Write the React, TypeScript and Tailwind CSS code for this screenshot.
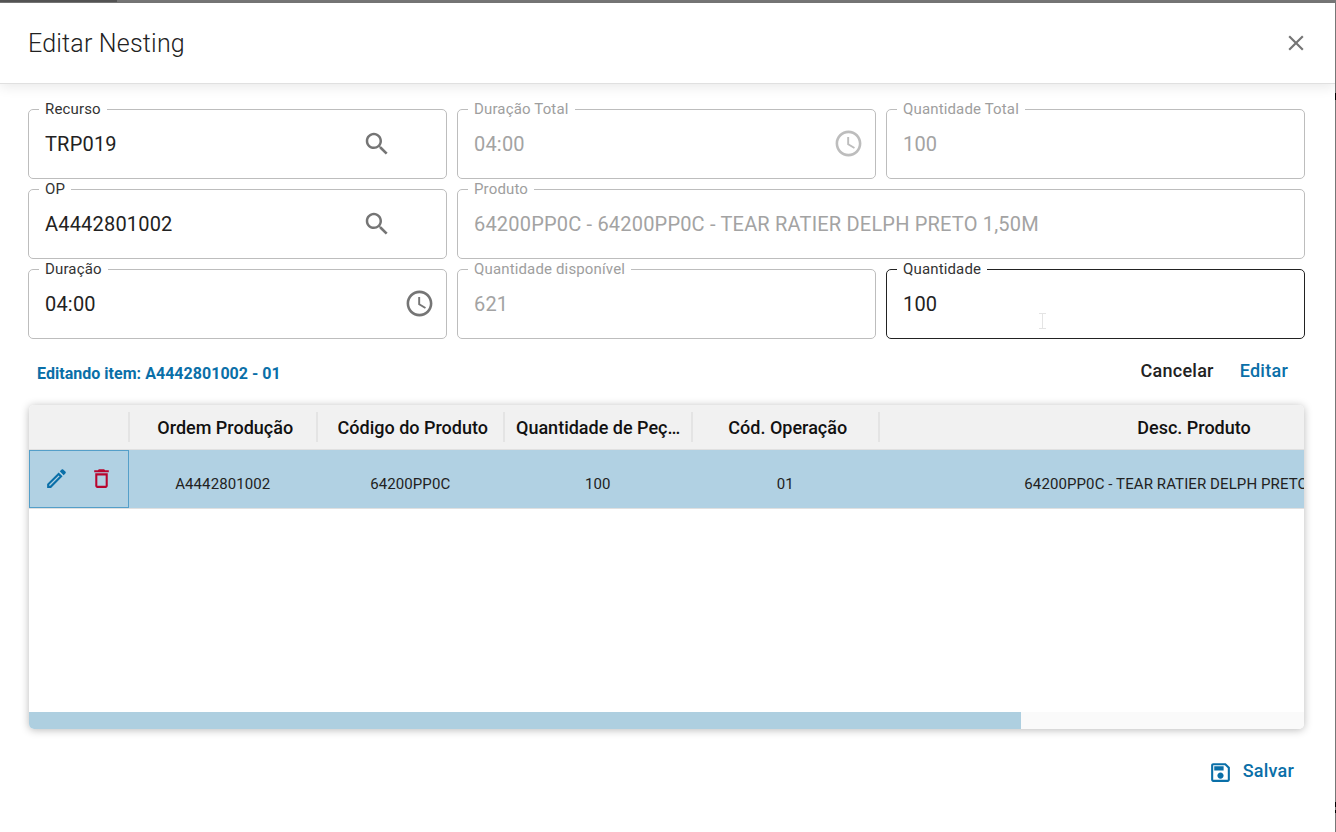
import React from "react";

const SEARCH = "M15.5 14h-.79l-.28-.27C15.41 12.59 16 11.11 16 9.5 16 5.91 13.09 3 9.5 3S3 5.91 3 9.5 5.91 16 9.5 16c1.61 0 3.09-.59 4.23-1.57l.27.28v.79l5 4.99L20.49 19l-4.99-5zm-6 0C7.01 14 5 11.99 5 9.5S7.01 5 9.5 5 14 7.01 14 9.5 11.99 14 9.5 14z";
const CLOCK = "M11.99 2C6.47 2 2 6.48 2 12s4.47 10 9.99 10C17.52 22 22 17.52 22 12S17.52 2 11.99 2zM12 20c-4.42 0-8-3.58-8-8s3.58-8 8-8 8 3.58 8 8-3.58 8-8 8zM12.5 7H11v6l5.25 3.15.75-1.23-4.5-2.67z";
const CLOSE = "M19 6.41L17.59 5 12 10.59 6.41 5 5 6.41 10.59 12 5 17.59 6.41 19 12 13.41 17.59 19 19 17.59 13.41 12z";
const EDIT = "M14.06 9.02l.92.92L5.92 19H5v-.92l9.06-9.06M17.66 3c-.25 0-.51.1-.7.29l-1.83 1.83 3.75 3.75 1.83-1.83c.39-.39.39-1.02 0-1.41l-2.34-2.34c-.2-.2-.45-.29-.71-.29zm-3.6 3.19L3 17.25V21h3.75L17.81 9.94l-3.75-3.75z";
const TRASH = "M6 19c0 1.1.9 2 2 2h8c1.1 0 2-.9 2-2V7H6v12zM8 9h8v10H8V9zm7.5-5l-1-1h-5l-1 1H5v2h14V4z";
const SAVE = "M17 3H5c-1.11 0-2 .9-2 2v14c0 1.1.89 2 2 2h14c1.1 0 2-.9 2-2V7l-4-4zm2 16H5V5h11.17L19 7.83V19zm-7-7c-1.66 0-3 1.34-3 3s1.34 3 3 3 3-1.34 3-3-1.34-3-3-3zM6 6h9v4H6z";

function Icon({ d, size, className }: { d: string; size: number; className?: string }) {
  return (
    <svg viewBox="0 0 24 24" width={size} height={size} fill="currentColor" className={className}>
      <path d={d} />
    </svg>
  );
}

type FieldProps = {
  label: string;
  value: string;
  disabled?: boolean;
  focused?: boolean;
  icon?: React.ReactNode;
  className?: string;
  children?: React.ReactNode;
};

function Field({ label, value, disabled, focused, icon, className, children }: FieldProps) {
  const border = focused ? "border-[#222222]" : "border-[#bdbdbd]";
  const legend = disabled ? "text-[#9e9e9e]" : "text-[#333333]";
  const text = disabled ? "text-[#a3a3a3]" : "text-[#222222]";
  return (
    <fieldset className={`relative h-[78px] rounded-[5px] border ${border} ${className ?? ""}`}>
      <legend className={`ml-[10px] h-4 px-[6px] text-[15px] leading-4 tracking-[0.15px] ${legend}`}>{label}</legend>
      <div className="flex h-[53px] items-center pl-4 pr-[11px]">
        <span className={`flex-1 truncate text-[20px] leading-6 tracking-[0.19px] ${text}`}>{value}</span>
        {icon}
      </div>
      {children}
    </fieldset>
  );
}

const COLS = [
  { title: "Ordem Produção", value: "A4442801002", w: "w-[187.5px]", head: "pl-[14px] pr-[9px] border-r-2", cell: "w-[187.5px]" },
  { title: "Código do Produto", value: "64200PP0C", w: "w-[187.5px]", head: "pl-[14px] pr-[9px] border-r-2", cell: "w-[187.5px]" },
  { title: "Quantidade de Peças", value: "100", w: "w-[187.5px]", head: "pl-[11px] pr-[9px] border-r-2", cell: "w-[187.5px]" },
  { title: "Cód. Operação", value: "01", w: "w-[187.5px]", head: "pl-[14px] pr-[9px] border-r-2", cell: "w-[187.5px]" },
  { title: "Desc. Produto", value: "64200PP0C - TEAR RATIER DELPH PRETO 1,50M", w: "w-[628px]", head: "px-3", cell: "w-[628px] pr-[8px]" },
];

export default function App() {
  const searchIcon = <Icon d={SEARCH} size={30} className="mr-[43px] shrink-0 text-[#757575]" />;
  return (
    <div className="relative h-[832px] w-[1336px]">
      <div
        className="flex h-[832px] w-[1336px] flex-col overflow-hidden border-r border-[#777777] bg-white text-[#222222]"
        style={{ fontFamily: "Roboto, 'Liberation Sans', sans-serif" }}
      >
        <div className="h-[3px] shrink-0 bg-[#777777]">
          <div className="h-[2px] w-[117px] bg-[#555555]" />
        </div>

        <header className="relative z-10 flex h-[81px] shrink-0 items-center justify-between border-b border-[#e0e0e0] bg-white pl-[28px] pr-[26px] shadow-[0_3px_12px_rgba(0,0,0,0.09)]">
          <h1 className="pt-[2px] text-[25px] font-light leading-8 tracking-[0.2px] text-[#222222]">Editar Nesting</h1>
          <Icon d={CLOSE} size={26} className="text-[#757575]" />
        </header>

        <main className="flex flex-1 flex-col pl-[28px] pr-[30px] pt-[17px]">
          <div className="grid grid-cols-3 gap-x-[10px] gap-y-[2px]">
            <Field label="Recurso" value="TRP019" icon={searchIcon} />
            <Field
              label="Duração Total"
              value="04:00"
              disabled
              icon={<Icon d={CLOCK} size={31} className="shrink-0 text-[#bdbdbd]" />}
            />
            <Field label="Quantidade Total" value="100" disabled />
            <Field label="OP" value="A4442801002" icon={searchIcon} />
            <Field
              label="Produto"
              value="64200PP0C - 64200PP0C - TEAR RATIER DELPH PRETO 1,50M"
              disabled
              className="col-span-2"
            />
            <Field
              label="Duração"
              value="04:00"
              icon={<Icon d={CLOCK} size={31} className="shrink-0 text-[#757575]" />}
            />
            <Field label="Quantidade disponível" value="621" disabled />
            <Field label="Quantidade" value="100" focused>
              <svg width="7" height="16" viewBox="0 0 7 16" className="absolute left-[152px] top-[36px] text-[#e4e4e4]" fill="none" stroke="currentColor">
                <path d="M0 .5h7M3.5 .5v15M0 15.5h7" />
              </svg>
            </Field>
          </div>

          <div className="mt-[13px] flex h-[38px] items-center justify-between pl-[9px] pr-[17px]">
            <span className="pt-[5px] text-[16px] font-bold tracking-[0.03px] text-[#0a6fa8]">
              Editando item: A4442801002 - 01
            </span>
            <div className="flex items-center gap-[26px] pb-[2px] text-[18px] font-medium tracking-[0.25px]">
              <span className="text-[#222222]">Cancelar</span>
              <span className="text-[#0a6fa8]">Editar</span>
            </div>
          </div>

          <section className="mx-px mt-[15px] flex h-[324px] flex-col overflow-hidden rounded-[5px] bg-white shadow-[0_1px_8px_rgba(0,0,0,0.28)]">
            <div className="flex h-[45px] shrink-0 items-center overflow-hidden border-b border-[#e0e0e0] bg-[#f1f1f1]">
              <div className="h-[30px] w-[101px] shrink-0 border-r-2 border-[#e4e4e4]" />
              {COLS.map((c) => (
                <div
                  key={c.title}
                  className={`flex h-[30px] shrink-0 items-center justify-center border-[#e4e4e4] ${c.w} ${c.head}`}
                >
                  <span className="truncate text-[18px] font-medium text-[#111111]">{c.title}</span>
                </div>
              ))}
            </div>

            <div className="flex h-[59px] shrink-0 overflow-hidden border-b border-[#e0e0e0] bg-[#b1d1e3]">
              <div className="flex w-[100px] shrink-0 items-center gap-[20px] border border-[#549fc9] pb-[2px] pl-[14px]">
                <Icon d={EDIT} size={25} className="text-[#0a6fa8]" />
                <Icon d={TRASH} size={25} className="text-[#b8042e]" />
              </div>
              {COLS.map((c) => (
                <div key={c.title} className={`flex shrink-0 items-center justify-center whitespace-nowrap pt-[10px] text-[15px] tracking-[0.1px] text-[#222222] ${c.cell}`}>
                  {c.value}
                </div>
              ))}
            </div>

            <div className="flex-1" />

            <div className="h-[17px] shrink-0 bg-[#fafafa]">
              <div className="h-full w-[992px] bg-[#aecfe0]" />
            </div>
          </section>

          <div className="mt-[28px] flex items-center justify-end gap-[10px] pr-[11px] text-[#0a6fa8]">
            <Icon d={SAVE} size={25} />
            <span className="pb-[4px] text-[18px] font-medium tracking-[0.2px]">Salvar</span>
          </div>
        </main>
      </div>
      <span className="absolute right-0 top-[93px] h-[7px] w-px bg-black" />
      <span className="absolute right-0 top-[802px] h-[5px] w-px bg-black" />
      <span className="absolute right-0 top-[810px] h-[3px] w-px bg-black" />
    </div>
  );
}
